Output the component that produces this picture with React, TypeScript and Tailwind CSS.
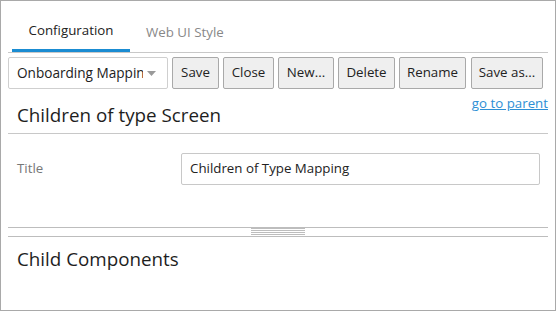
import React from 'react'

const font = { fontFamily: '"Open Sans", "Noto Sans", sans-serif' }

const buttons = [
  { label: 'Save', w: 'w-[47px]' },
  { label: 'Close', w: 'w-[51px]' },
  { label: 'New...', w: 'w-[56px]' },
  { label: 'Delete', w: 'w-[57px]' },
  { label: 'Rename', w: 'w-[67px]' },
  { label: 'Save as...', w: 'w-[72px] ml-[1px]' },
]

export default function App() {
  return (
    <div
      className="w-[556px] h-[311px] border border-[#a9a9a9] bg-white text-[#222] overflow-hidden"
      style={font}
    >
      <div className="px-[7px]">
        {/* Tabs */}
        <div className="flex h-[52px] border-b border-[#c8c8c8] pl-[4px]">
          <div className="w-[118px] h-[51px] flex items-center justify-center pt-[12px] border-b-[3px] border-[#1a8cd2] text-[13.3px] text-[#222]">
            Configuration
          </div>
          <div className="h-[51px] flex items-center px-[16px] pt-[12px] text-[13.3px] text-[#888]">
            Web UI Style
          </div>
        </div>

        {/* Toolbar */}
        <div className="flex items-center gap-[4px] pt-[4px]">
          <div className="w-[160px] h-[32px] border border-[#cfcfcf] rounded-[2px] bg-white flex items-center pl-[8px] text-[13.6px]">
            <span className="w-[126px] overflow-hidden whitespace-nowrap">Onboarding Mapping</span>
            <svg width="9" height="5" viewBox="0 0 9 5" className="ml-[4px] shrink-0">
              <path d="M0 0 L9 0 L4.5 5 Z" fill="#9a9a9a" />
            </svg>
          </div>
          {buttons.map((b) => (
            <button
              key={b.label}
              className={`${b.w} h-[32px] border border-[#a9a9a9] rounded-[2px] bg-[#efefef] text-[13.3px] text-[#222] whitespace-nowrap`}
            >
              {b.label}
            </button>
          ))}
        </div>

        {/* Heading + link */}
        <div className="flex justify-between h-[45px] border-b border-[#c8c8c8] pl-[9px]">
          <div className="pt-[15px]">
            <span className="block text-[18.8px] leading-[22px] text-[#1e1e1e]">Children of type Screen</span>
          </div>
          <div className="pt-[6px]">
            <a className="block text-[13.3px] leading-[16px] text-[#2d8fd5] underline">go to parent</a>
          </div>
        </div>

        {/* Title field */}
        <div className="flex items-center pt-[19px] pl-[9px]">
          <span className="w-[164px] text-[13.3px] text-[#777]">Title</span>
          <div className="w-[359px] h-[32px] border border-[#c8c8c8] rounded-[2px] flex items-center pl-[8px] text-[13.3px]">
            Children of Type Mapping
          </div>
        </div>

        {/* Splitter */}
        <div className="mt-[42px]">
          <div className="h-px bg-[#bdbdbd]" />
          <div className="flex justify-center h-[8px]">
            <div className="w-[54px] flex flex-col gap-[1px]">
              <div className="h-px bg-[#bdbdbd]" />
              <div className="h-px bg-[#bdbdbd]" />
              <div className="h-px bg-[#bdbdbd]" />
              <div className="h-px bg-[#bdbdbd]" />
            </div>
          </div>
          <div className="h-px bg-[#bdbdbd]" />
        </div>

        {/* Child components */}
        <div className="pl-[9px] pt-[11px]">
          <span className="block text-[18.8px] leading-[22px] text-[#1e1e1e]">Child Components</span>
        </div>
      </div>
    </div>
  )
}
